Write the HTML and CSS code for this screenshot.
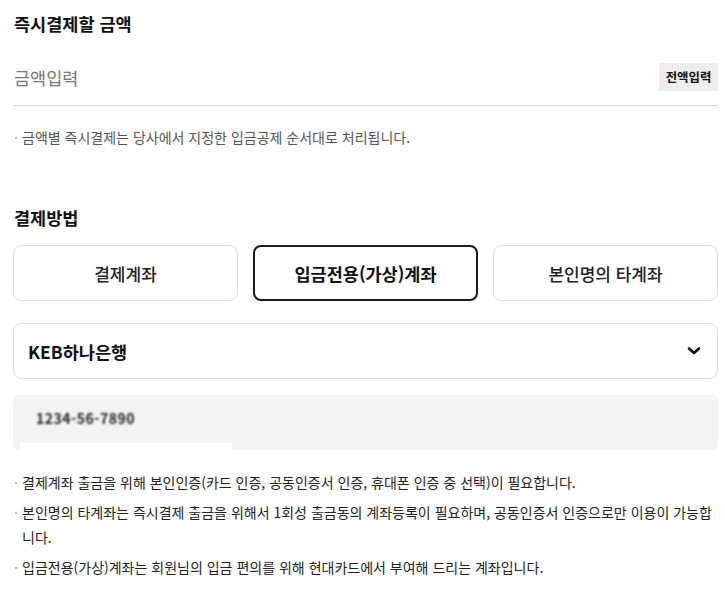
FILE: index.html
```html
<!DOCTYPE html>
<html lang="ko">
<head>
<meta charset="utf-8">
<link rel="stylesheet" href="styles.css">
</head>
<body>
<div class="page">
  <h2 class="section-title">즉시결제할 금액</h2>
  <div class="amount-row">
    <span class="placeholder">금액입력</span>
    <button class="full-btn">전액입력</button>
  </div>
  <p class="note-top"><span class="dot">·</span><span>금액별 즉시결제는 당사에서 지정한 입금공제 순서대로 처리됩니다.</span></p>

  <h2 class="section-title method-title">결제방법</h2>
  <div class="tabs">
    <button class="tab">결제계좌</button>
    <button class="tab active">입금전용(가상)계좌</button>
    <button class="tab">본인명의 타계좌</button>
  </div>

  <div class="select">
    <span class="bank">KEB하나은행</span>
    <svg class="chev" width="14" height="10" viewBox="0 0 14 10"><polyline points="2,2.5 7,7 12,2.5" fill="none" stroke="#111" stroke-width="2.6" stroke-linecap="round" stroke-linejoin="round"/></svg>
  </div>

  <div class="account">
    <span class="account-num">1234-56-7890</span>
    <span class="mask"></span>
  </div>

  <ul class="notes">
    <li><span class="dot">·</span><span>결제계좌 출금을 위해 본인인증(카드 인증, 공동인증서 인증, 휴대폰 인증 중 선택)이 필요합니다.</span></li>
    <li><span class="dot">·</span><span>본인명의 타계좌는 즉시결제 출금을 위해서 1회성 출금동의 계좌등록이 필요하며, 공동인증서 인증으로만 이용이 가능합니다.</span></li>
    <li><span class="dot">·</span><span>입금전용(가상)계좌는 회원님의 입금 편의를 위해 현대카드에서 부여해 드리는 계좌입니다.</span></li>
  </ul>
</div>
</body>
</html>
```

FILE: styles.css
```css
* { box-sizing: border-box; }
html, body { margin: 0; padding: 0; background: #fff; }
body {
  font-family: "Noto Sans CJK KR", "Noto Sans", sans-serif;
  color: #111;
}
.page {
  width: 725px;
  padding: 12px 7px 0 13px;
}
.section-title {
  margin: 0;
  font-size: 17.5px;
  line-height: 24px;
  font-weight: 700;
  color: #111;
  padding-left: 1px;
}
.amount-row {
  margin-top: 21px;
  height: 49px;
  padding-bottom: 8px;
  display: flex;
  align-items: center;
  justify-content: space-between;
  border-bottom: 1px solid #d4d4d4;
}
.placeholder {
  font-size: 17.5px;
  color: #777;
  padding-left: 1px;
}
.full-btn {
  font-family: inherit;
  border: 0;
  background: #ededed;
  border-radius: 2px;
  width: 59px;
  height: 28px;
  font-size: 12.4px;
  font-weight: 700;
  color: #111;
  padding: 0;
}
.note-top {
  display: flex;
  margin: 21px 0 0;
  font-size: 14px;
  line-height: 20px;
  color: #555;
}
.dot {
  flex: 0 0 9px;
  width: 9px;
  color: #aaa;
  padding-left: 1px;
}
.method-title { margin-top: 59px; }
.tabs {
  margin-top: 15px;
  display: grid;
  grid-template-columns: repeat(3, 1fr);
  gap: 15px;
}
.tab {
  font-family: inherit;
  height: 56px;
  background: #fff;
  border: 1px solid #dedede;
  border-radius: 8px;
  font-size: 17px;
  font-weight: 500;
  color: #222;
  padding: 0;
}
.tab.active {
  border: 2px solid #1a1a1a;
  font-size: 17.5px;
  font-weight: 700;
  color: #111;
}
.select {
  margin-top: 22px;
  height: 56px;
  border: 1px solid #dedede;
  border-radius: 8px;
  display: flex;
  align-items: center;
  justify-content: space-between;
  padding: 0 16px 0 14px;
}
.bank {
  font-size: 17.5px;
  font-weight: 700;
  color: #111;
}
.account {
  position: relative;
  margin-top: 16px;
  height: 55px;
  background: #f3f3f3;
  border-radius: 6px;
  padding: 10px 0 0 23px;
}
.account-num {
  display: inline-block;
  font-size: 14px;
  line-height: 20px;
  font-weight: 700;
  color: #222;
  letter-spacing: 0.5px;
  filter: blur(1.2px);
}
.mask {
  position: absolute;
  left: 7px;
  bottom: 0;
  width: 212px;
  height: 7px;
  background: #fff;
}
.notes {
  list-style: none;
  margin: 20px 0 0;
  padding: 0;
}
.notes li {
  display: flex;
  font-size: 14px;
  line-height: 25px;
  color: #222;
  margin-bottom: 5px;
}
```
